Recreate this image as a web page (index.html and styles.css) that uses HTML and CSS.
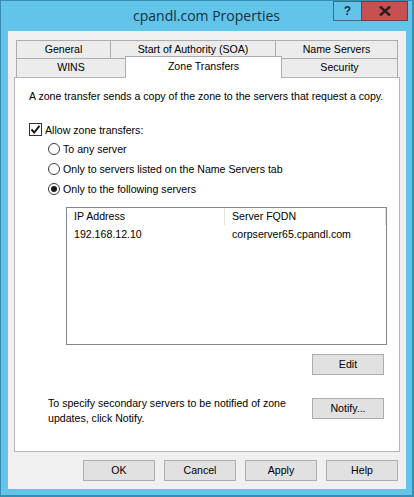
FILE: index.html
```html
<!DOCTYPE html>
<html lang="en">
<head>
    <meta charset="UTF-8">
    <title>cpandl.com Properties</title>
    <link rel="stylesheet" href="styles.css">
</head>
<body>

    <!-- Ventana de propiedades de la zona -->
    <div class="window">
        <div class="titlebar">
            <span></span>
            <div class="title">cpandl.com Properties</div>
            <div class="caption-buttons">
                <span class="cap-btn help-btn">?</span>
                <span class="cap-btn close-btn">
                    <svg width="12" height="10" viewBox="0 0 12 10"><path d="M1 0.5 L11 9.5 M11 0.5 L1 9.5" stroke="#2b1b1b" stroke-width="2.4"/></svg>
                </span>
            </div>
        </div>

        <div class="client">
            <!-- Pestañas -->
            <div class="tabs">
                <div class="tab-row back-row">
                    <div class="tab tab-general">General</div>
                    <div class="tab tab-soa">Start of Authority (SOA)</div>
                    <div class="tab tab-ns">Name Servers</div>
                </div>
                <div class="tab-row front-row">
                    <div class="tab tab-wins">WINS</div>
                    <div class="tab tab-zone selected">Zone Transfers</div>
                    <div class="tab tab-security">Security</div>
                </div>
            </div>

            <div class="tab-page">
                <div class="intro">A zone transfer sends a copy of the zone to the servers that request a copy.</div>

                <div class="options">
                    <div class="check-row">
                        <span class="checkbox">
                            <svg width="11" height="11" viewBox="0 0 11 11"><path d="M1.5 5.5 L4.2 8.5 L9.5 1.8" fill="none" stroke="#1a1a1a" stroke-width="2"/></svg>
                        </span>
                        <span>Allow zone transfers:</span>
                    </div>
                    <div class="radio-row"><span class="radio"></span><span>To any server</span></div>
                    <div class="radio-row"><span class="radio"></span><span>Only to servers listed on the Name Servers tab</span></div>
                    <div class="radio-row"><span class="radio checked"></span><span>Only to the following servers</span></div>
                </div>

                <!-- Lista de servidores -->
                <div class="server-list">
                    <div class="list-header">
                        <div class="col">IP Address</div>
                        <div class="col">Server FQDN</div>
                    </div>
                    <div class="list-row">
                        <div class="col">192.168.12.10</div>
                        <div class="col">corpserver65.cpandl.com</div>
                    </div>
                </div>

                <div class="edit-row">
                    <div class="btn">Edit</div>
                </div>

                <div class="notify-row">
                    <div class="notify-text">To specify secondary servers to be notified of zone<br>updates, click Notify.</div>
                    <div class="btn">Notify...</div>
                </div>
            </div>

            <!-- Botones del dialogo -->
            <div class="dialog-buttons">
                <div class="btn">OK</div>
                <div class="btn">Cancel</div>
                <div class="btn">Apply</div>
                <div class="btn">Help</div>
            </div>
        </div>
    </div>

</body>
</html>
```

FILE: styles.css
```css
body {
    margin: 0;
    padding: 0;
    background: #fff;
    font-family: "Liberation Sans", Arial, sans-serif;
    font-size: 10.6px;
    color: #000;
}
/* Marco de la ventana */
.window {
    width: 414px;
    height: 497px;
    box-sizing: border-box;
    background: #62c4e8;
    border: 1px solid #3a8db2;
    border-right-width: 2px;
    border-bottom-width: 2px;
    display: flex;
    flex-direction: column;
}
.titlebar {
    height: 30px;
    display: grid;
    grid-template-columns: 1fr auto 1fr;
}
.title {
    line-height: 30px;
    font-family: "Open Sans", "Noto Sans", sans-serif;
    font-size: 14px;
    color: #17313f;
}
.caption-buttons {
    justify-self: end;
    display: flex;
    margin-right: 4px;
}
.cap-btn {
    height: 20px;
    box-sizing: border-box;
    border: 1px solid #3f6e82;
    display: flex;
    justify-content: center;
    align-items: center;
}
.help-btn {
    width: 28px;
    border-right: none;
    font-weight: bold;
    font-size: 12px;
    color: #1c3150;
}
.close-btn {
    width: 47px;
    background: #c75050;
    border-color: #7a3a3a;
}
/* Area cliente */
.client {
    height: 458px;
    margin: 0 6px 0 7px;
    background: #f0f0f0;
    display: flex;
    flex-direction: column;
}
/* Pestañas */
.tabs {
    margin: 9px 8px 0 8px;
}
.tab-row {
    display: flex;
}
.tab {
    box-sizing: border-box;
    border: 1px solid #acacac;
    border-bottom: none;
    border-right: none;
    background: #ececec;
    text-align: center;
    white-space: nowrap;
}
.tab:last-child {
    border-right: 1px solid #acacac;
}
.back-row .tab {
    height: 18px;
    line-height: 16px;
}
.front-row {
    height: 19px;
    align-items: flex-end;
}
.front-row .tab {
    height: 19px;
    line-height: 17px;
}
.front-row .tab.selected {
    height: 22px;
    margin-bottom: -1px;
    background: #fff;
    border-right: 1px solid #acacac;
    position: relative;
    z-index: 1;
    line-height: 18px;
}
.tab-general { width: 94px; }
.tab-soa { width: 165px; }
.tab-ns { width: 123px; }
.tab-wins { width: 109px; }
.tab-zone { width: 157px; }
.tab-security { width: 116px; border-left: none !important; }
/* Pagina de la pestaña */
.tab-page {
    margin: 0 6px;
    height: 375px;
    box-sizing: border-box;
    border: 1px solid #b4b4b4;
    background: #fff;
    padding: 11px 14px 0 14px;
}
.intro {
    line-height: 15px;
    white-space: nowrap;
}
.options {
    margin-top: 16px;
}
.check-row {
    height: 19px;
    display: flex;
    align-items: center;
    gap: 3px;
}
.checkbox {
    width: 13px;
    height: 13px;
    box-sizing: border-box;
    border: 1px solid #333;
    background: #fff;
    display: flex;
    justify-content: center;
    align-items: center;
}
.radio-row {
    height: 20px;
    padding-left: 19px;
    display: flex;
    align-items: center;
    gap: 3px;
}
.radio {
    width: 12px;
    height: 12px;
    box-sizing: border-box;
    border: 1px solid #3c3c3c;
    border-radius: 50%;
    background: #fff;
    display: flex;
    justify-content: center;
    align-items: center;
}
.radio.checked::after {
    content: "";
    width: 6px;
    height: 6px;
    border-radius: 50%;
    background: #1a1a1a;
}
/* Lista de servidores */
.server-list {
    margin: 8px 0 0 37px;
    width: 321px;
    height: 138px;
    box-sizing: border-box;
    border: 1px solid #828790;
}
.list-header,
.list-row {
    display: grid;
    grid-template-columns: 158px 1fr;
}
.list-header {
    height: 17px;
    line-height: 17px;
}
.list-header .col {
    padding-left: 7px;
    border-right: 1px solid #e2e2e2;
}
.list-row {
    height: 18px;
    line-height: 18px;
}
.list-row .col {
    padding-left: 7px;
}
/* Botones */
.btn {
    width: 72px;
    height: 21px;
    box-sizing: border-box;
    border: 1px solid #adadad;
    background: #e1e1e1;
    text-align: center;
    line-height: 19px;
}
.edit-row {
    margin-top: 9px;
    display: flex;
    justify-content: flex-end;
    padding-right: 1px;
}
.notify-row {
    margin-top: 21px;
    display: flex;
    justify-content: space-between;
    align-items: flex-start;
    padding-right: 1px;
}
.notify-text {
    padding-left: 19px;
    line-height: 15px;
    white-space: nowrap;
}
.notify-row .btn {
    margin-top: 2px;
}
.dialog-buttons {
    margin: 8px 8px 0 0;
    display: flex;
    justify-content: flex-end;
    gap: 9px;
}
```
